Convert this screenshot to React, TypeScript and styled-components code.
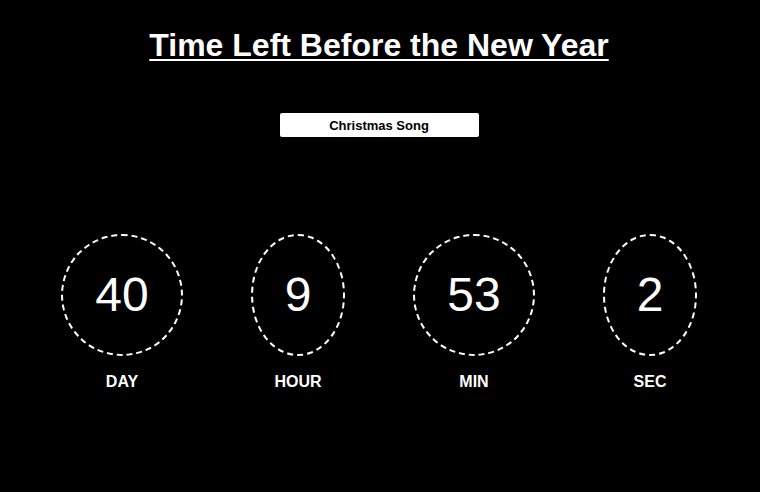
import React from "react";
import styled, { createGlobalStyle } from "styled-components";

const Global = createGlobalStyle`
  html, body { margin: 0; padding: 0; background: #000; }
  body { font-family: "Liberation Sans", Arial, sans-serif; color: #fff; }
`;

const Page = styled.div`
  width: 758px;
  height: 492px;
  box-sizing: border-box;
  padding-top: 27px;
  display: flex;
  flex-direction: column;
  align-items: center;
  background: #000;
`;

const Title = styled.h1`
  margin: 0;
  font-size: 32px;
  line-height: 37px;
  font-weight: 700;
  text-decoration: underline;
  text-decoration-thickness: 2px;
  text-underline-offset: 3px;
  color: #fff;
`;

const SongButton = styled.button`
  margin-top: 49px;
  width: 199px;
  height: 24px;
  background: #fff;
  color: #000;
  border: none;
  border-radius: 2px;
  font-family: "Liberation Sans", Arial, sans-serif;
  font-size: 13px;
  font-weight: 700;
  padding: 0;
  cursor: pointer;
`;

const Counters = styled.div`
  margin-top: 97px;
  align-self: stretch;
  box-sizing: border-box;
  padding-left: 34px;
  display: grid;
  grid-template-columns: repeat(4, 176px);
`;

const Unit = styled.div`
  display: flex;
  flex-direction: column;
  align-items: center;
`;

const Ring = styled.div`
  padding: 32px;
  border: 2px dashed #fff;
  border-radius: 50%;
  font-size: 48px;
  line-height: 54px;
  color: #fff;
`;

const Label = styled.div`
  margin-top: 17px;
  font-size: 16px;
  font-weight: 700;
  color: #fff;
`;

const units = [
  { value: 40, label: "DAY" },
  { value: 9, label: "HOUR" },
  { value: 53, label: "MIN" },
  { value: 2, label: "SEC" },
];

export default function App() {
  return (
    <>
      <Global />
      <Page>
        <Title>Time Left Before the New Year</Title>
        <SongButton>Christmas Song</SongButton>
        <Counters>
          {units.map((u) => (
            <Unit key={u.label}>
              <Ring>{u.value}</Ring>
              <Label>{u.label}</Label>
            </Unit>
          ))}
        </Counters>
      </Page>
    </>
  );
}
